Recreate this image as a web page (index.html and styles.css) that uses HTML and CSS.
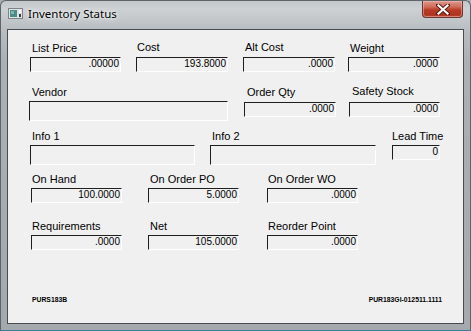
FILE: index.html
```html
<!DOCTYPE html>
<html>
<head>
<meta charset="utf-8">
<link rel="stylesheet" href="styles.css">
</head>
<body>
<div class="window">
  <div class="titlebar">
    <svg class="app-icon" width="15" height="11" viewBox="0 0 15 11">
      <rect x="0.5" y="0.5" width="14" height="10" fill="#dfe3e6" stroke="#7d8387"/>
      <rect x="2" y="2" width="7" height="7" fill="#4e8c88"/>
      <rect x="3" y="3" width="3" height="3" fill="#7fb7b2"/>
      <rect x="11" y="2" width="2" height="3" fill="#ffffff"/>
      <rect x="11" y="6" width="2" height="3" fill="#3a3f43"/>
    </svg>
    <span class="title">Inventory Status</span>
    <div class="close">
      <svg width="14" height="11" viewBox="0 0 14 11">
        <path d="M2 1 L12 10 M12 1 L2 10" stroke="#5a1a12" stroke-width="4" stroke-linecap="square"/>
        <path d="M2.5 1.5 L11.5 9.5 M11.5 1.5 L2.5 9.5" stroke="#ffffff" stroke-width="2.2" stroke-linecap="square"/>
      </svg>
    </div>
  </div>
  <div class="client">
    <div class="row r1">
      <div class="fld a1"><div class="lbl p2">List Price</div><div class="box">.00000</div></div>
      <div class="fld a2"><div class="lbl p1 up">Cost</div><div class="box">193.8000</div></div>
      <div class="fld a3"><div class="lbl p2 up">Alt Cost</div><div class="box">.0000</div></div>
      <div class="fld a4"><div class="lbl p2">Weight</div><div class="box">.0000</div></div>
    </div>
    <div class="row r2">
      <div class="fld b1"><div class="lbl p3">Vendor</div><div class="box tall"></div></div>
      <div class="fld b2"><div class="lbl p3">Order Qty</div><div class="box dn">.0000</div></div>
      <div class="fld b3"><div class="lbl p3 up">Safety Stock</div><div class="box dn">.0000</div></div>
    </div>
    <div class="row r3">
      <div class="fld c1"><div class="lbl p2">Info 1</div><div class="box tall"></div></div>
      <div class="fld c2"><div class="lbl p2">Info 2</div><div class="box tall"></div></div>
      <div class="fld c3"><div class="lbl right">Lead Time</div><div class="box">0</div></div>
    </div>
    <div class="row r4">
      <div class="fld d1"><div class="lbl p1">On Hand</div><div class="box">100.0000</div></div>
      <div class="fld d2"><div class="lbl p2">On Order PO</div><div class="box">5.0000</div></div>
      <div class="fld d3"><div class="lbl p1">On Order WO</div><div class="box">.0000</div></div>
    </div>
    <div class="row r5">
      <div class="fld d1"><div class="lbl p1">Requirements</div><div class="box">.0000</div></div>
      <div class="fld d2"><div class="lbl p2">Net</div><div class="box">105.0000</div></div>
      <div class="fld d3"><div class="lbl p1">Reorder Point</div><div class="box">.0000</div></div>
    </div>
    <div class="footer">
      <span>PURS183B</span>
      <span>PUR183GI-012511.1111</span>
    </div>
  </div>
</div>
</body>
</html>
```

FILE: styles.css
```css
html, body {
  margin: 0;
  padding: 0;
  background: #a9aeb2;
}

.window {
  width: 471px;
  height: 331px;
  box-sizing: border-box;
  display: flex;
  flex-direction: column;
  background: linear-gradient(to bottom, #c2c7cb 0px, #cdd1d4 8px, #b9bec2 28px, #aab0b4 60px, #a3a9ad 100%);
  border: 1px solid #5e6468;
  border-bottom: 1px solid #3c7d9c;
  border-radius: 6px 6px 0 0;
  overflow: hidden;
}

.titlebar {
  height: 28px;
  display: flex;
  align-items: flex-start;
  padding: 0 7px 0 7px;
}

.app-icon {
  margin-top: 7px;
  flex: none;
}

.title {
  margin-left: 5px;
  margin-top: 5px;
  font-family: "Noto Sans", "Open Sans", sans-serif;
  font-size: 11.5px;
  line-height: 15px;
  color: #000;
  text-shadow: 0 0 6px #ffffff, 0 0 3px #ffffff;
}

.close {
  margin-left: auto;
  width: 41px;
  height: 17px;
  box-sizing: border-box;
  border: 1px solid #6a3631;
  border-top: none;
  border-radius: 0 0 4px 4px;
  background: linear-gradient(to bottom, #dc9a8f 0px, #cf6a58 6px, #b83a24 9px, #ae3420 14px, #c8654c 17px);
  display: flex;
  align-items: center;
  justify-content: center;
  box-shadow: inset 0 0 0 1px rgba(255, 200, 190, 0.45);
}

.client {
  flex: 1;
  margin: 0 6px 6px 6px;
  border: 1px solid #484c50;
  background: #f0f0f0;
  display: flex;
  flex-direction: column;
  font-family: "Liberation Sans", Arial, sans-serif;
  color: #000;
}

.row {
  display: flex;
  align-items: flex-start;
}

.r1 { margin-top: 11px; }
.r2 { margin-top: 13px; }
.r3 { margin-top: 8px; }
.r4 { margin-top: 7px; }
.r5 { margin-top: 16px; }

.fld {
  display: flex;
  flex-direction: column;
}

.a1 { margin-left: 22px; width: 91px; }
.a2 { margin-left: 15px; width: 92px; }
.a3 { margin-left: 15px; width: 92px; }
.a4 { margin-left: 13px; width: 92px; }

.b1 { margin-left: 21px; width: 199px; }
.b2 { margin-left: 16px; width: 92px; }
.b3 { margin-left: 13px; width: 91px; }

.c1 { margin-left: 22px; width: 165px; }
.c2 { margin-left: 15px; width: 166px; }
.c3 { margin-left: 16px; width: 48px; }

.d1 { margin-left: 23px; width: 91px; }
.d2 { margin-left: 26px; width: 91px; }
.d3 { margin-left: 28px; width: 91px; }

.lbl {
  font-size: 11px;
  line-height: 14px;
  height: 14px;
  margin-bottom: 2px;
  white-space: nowrap;
}

.lbl.up {
  margin-top: -1px;
  margin-bottom: 3px;
}

.p1 { padding-left: 1px; }
.p2 { padding-left: 2px; }
.p3 { padding-left: 3px; }
.right { text-align: right; }

.box {
  height: 15px;
  box-sizing: border-box;
  border-top: 1px solid #1e1e1e;
  border-left: 1px solid #1e1e1e;
  border-right: 1px solid #ffffff;
  border-bottom: 1px solid #ffffff;
  background: #f0f0f0;
  font-size: 10px;
  line-height: 12px;
  text-align: right;
  padding-right: 1px;
  white-space: nowrap;
}

.box.tall { height: 20px; }
.box.dn { margin-top: 1px; }

.footer {
  margin-top: auto;
  display: flex;
  justify-content: space-between;
  padding: 0 21px 19px 24px;
  font-family: "Liberation Sans", Arial, sans-serif;
  font-weight: bold;
  font-size: 6.8px;
  line-height: 9px;
}
```
